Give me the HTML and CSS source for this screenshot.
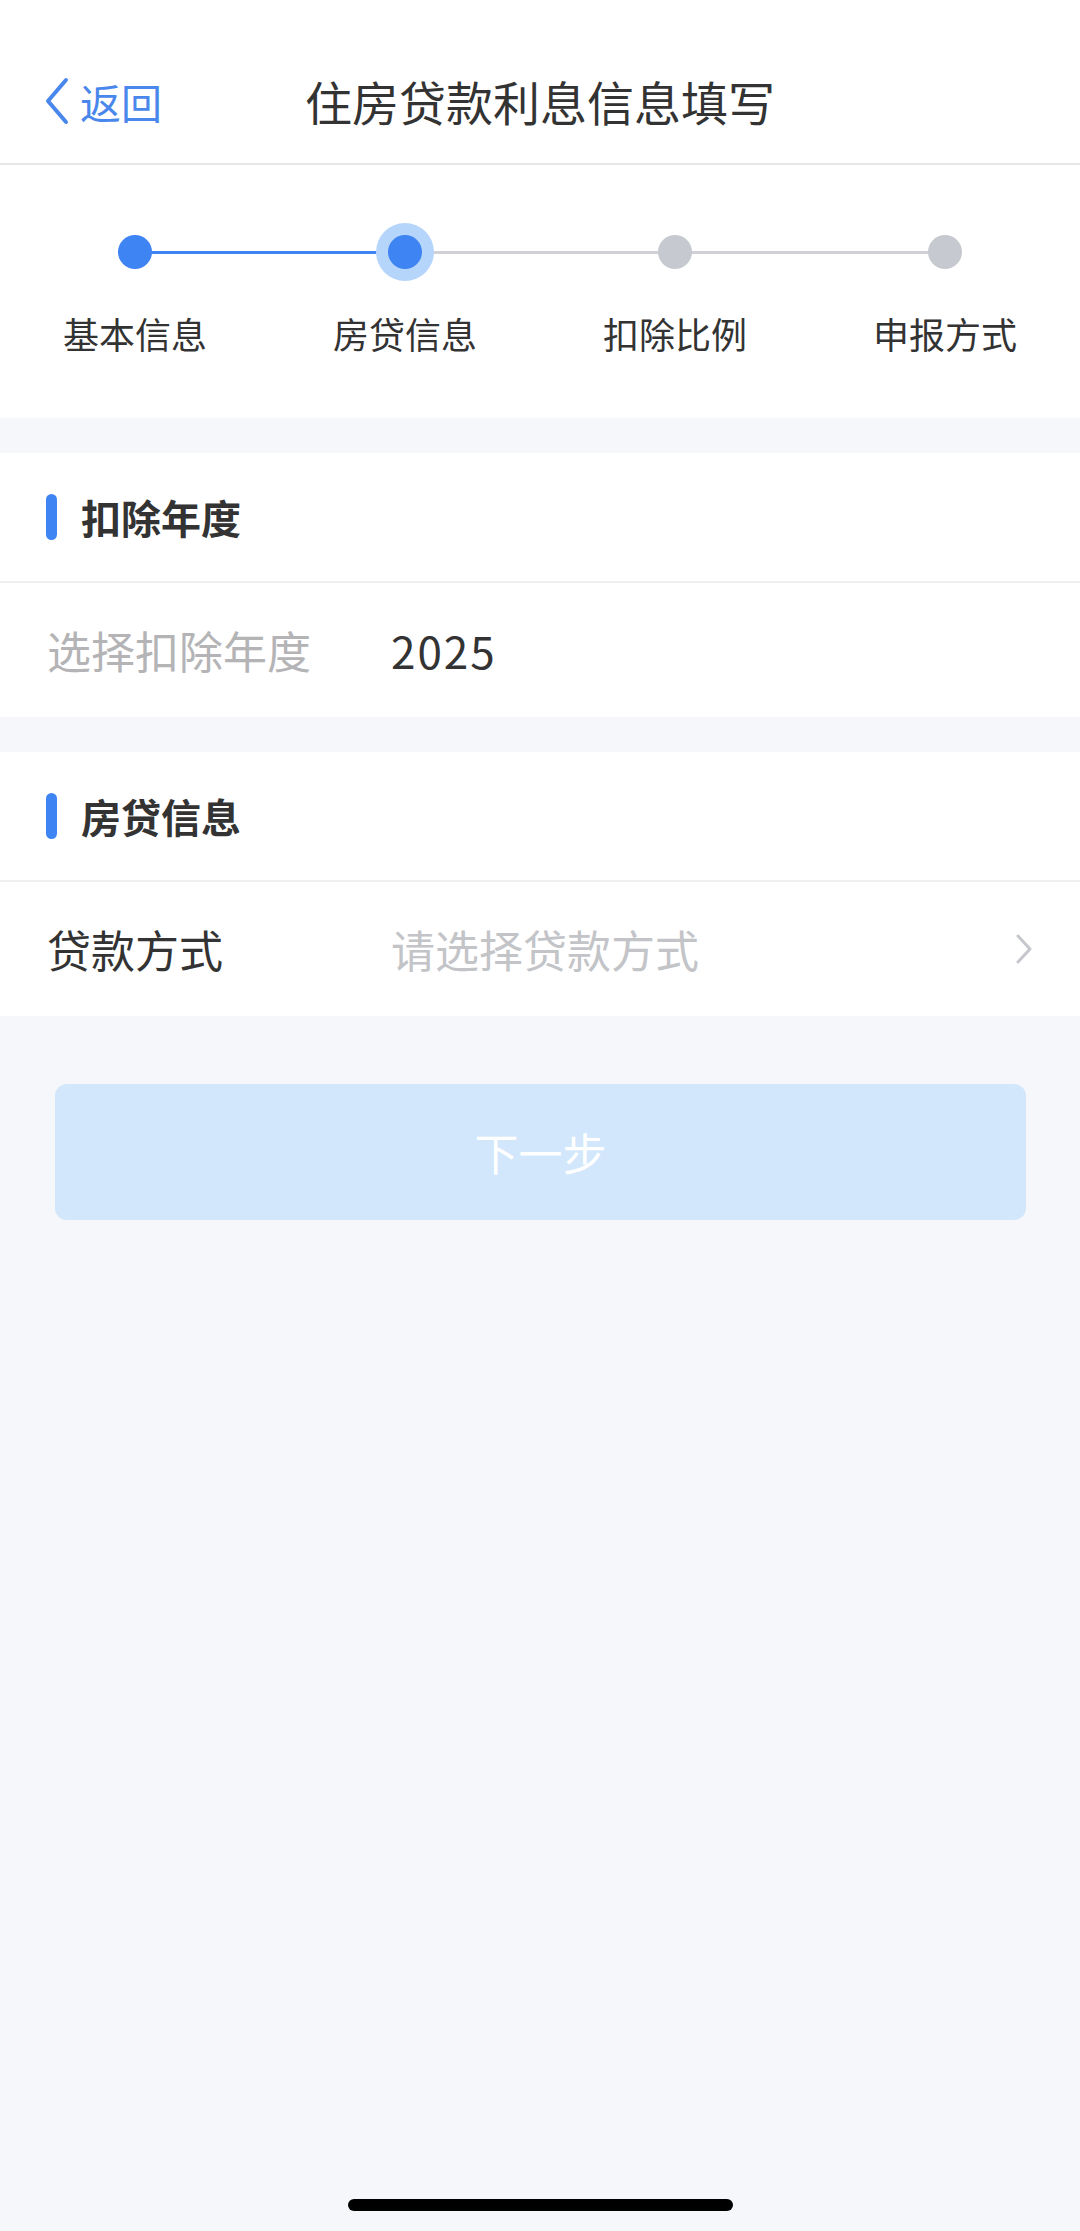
FILE: index.html
```html
<!DOCTYPE html>
<html lang="zh-CN">
<head>
  <meta charset="UTF-8" />
  <meta name="viewport" content="width=device-width, initial-scale=1.0" />
  <title>住房贷款利息信息填写</title>
  <link rel="stylesheet" href="styles.css">
</head>

<body>
  <header class="barra">
    <a class="volver" href="#">
      <svg class="flecha" width="26" height="48" viewBox="0 0 26 48">
        <path d="M22 3 L4 24 L22 45" fill="none" stroke="#4a87ec" stroke-width="4" stroke-linecap="round" stroke-linejoin="round" />
      </svg>
      <span>返回</span>
    </a>
    <h1>住房贷款利息信息填写</h1>
    <div></div>
  </header>

  <!-- pasos del formulario -->
  <section class="pasos">
    <div class="paso hecho">
      <div class="punto"><span></span></div>
      <p>基本信息</p>
    </div>
    <div class="paso actual">
      <div class="punto"><span></span></div>
      <p>房贷信息</p>
    </div>
    <div class="paso">
      <div class="punto"><span></span></div>
      <p>扣除比例</p>
    </div>
    <div class="paso">
      <div class="punto"><span></span></div>
      <p>申报方式</p>
    </div>
  </section>

  <section class="bloque">
    <h2 class="bloque-titulo">扣除年度</h2>
    <div class="fila">
      <span class="etiqueta gris">选择扣除年度</span>
      <span class="valor numero">2025</span>
    </div>
  </section>

  <section class="bloque">
    <h2 class="bloque-titulo">房贷信息</h2>
    <div class="fila">
      <span class="etiqueta">贷款方式</span>
      <span class="valor vacio">请选择贷款方式</span>
      <svg class="chevron" width="20" height="32" viewBox="0 0 20 32">
        <path d="M4 3 L16 16 L4 29" fill="none" stroke="#c5c7cc" stroke-width="3" stroke-linecap="round" stroke-linejoin="round" />
      </svg>
    </div>
  </section>

  <div class="acciones">
    <button class="siguiente" disabled>下一步</button>
  </div>

  <div class="indicador"></div>
</body>

</html>
```

FILE: styles.css
```css
body {
  margin: 0;
  min-height: 2231px;
  background-color: #f5f7fa;
  font-family: "Noto Sans CJK SC", "Noto Sans", sans-serif;
  color: #333;
}

.barra {
  height: 165px;
  box-sizing: border-box;
  padding-top: 38px;
  background-color: #fff;
  border-bottom: 2px solid #e4e5e7;
  display: grid;
  grid-template-columns: 1fr auto 1fr;
  align-items: center;
}

.volver {
  display: flex;
  align-items: center;
  gap: 10px;
  padding-left: 44px;
  color: #4a87ec;
  text-decoration: none;
  font-size: 41px;
  line-height: 1;
}

.volver span {
  margin-top: 2px;
}

.barra h1 {
  margin: 0;
  font-size: 47px;
  font-weight: 400;
  color: #333;
}

/* pasos */
.pasos {
  background-color: #fff;
  display: grid;
  grid-template-columns: repeat(4, 1fr);
  padding: 58px 0 61px;
}

.paso {
  position: relative;
  display: flex;
  flex-direction: column;
  align-items: center;
}

.paso + .paso::before { /* linea entre puntos */
  content: "";
  position: absolute;
  top: 28px;
  left: -50%;
  width: 100%;
  height: 3px;
  background-color: #cfd1d6;
}

.paso.hecho + .paso::before {
  background-color: #3f84f3;
}

.punto {
  position: relative;
  z-index: 1;
  width: 58px;
  height: 58px;
  display: flex;
  justify-content: center;
  align-items: center;
}

.punto span {
  width: 34px;
  height: 34px;
  border-radius: 50%;
  background-color: #c6c9cf;
}

.paso.hecho .punto span,
.paso.actual .punto span {
  background-color: #3f84f3;
}

.paso.actual .punto {
  background-color: #b6d5fb;
  border-radius: 50%;
}

.paso p {
  margin: 28px 0 0;
  font-size: 36px;
  line-height: 48px;
  color: #333;
}

/* bloques */
.bloque {
  margin-top: 35px;
  background-color: #fff;
}

.bloque-titulo {
  margin: 0;
  height: 128px;
  display: flex;
  align-items: center;
  gap: 24px;
  padding-left: 46px;
  border-bottom: 2px solid #efeff1;
  font-size: 40px;
  font-weight: 700;
  color: #333;
}

.bloque-titulo::before {
  content: "";
  width: 11px;
  height: 46px;
  border-radius: 6px;
  background-color: #3f84f3;
}

.fila {
  height: 134px;
  display: flex;
  align-items: center;
  padding: 0 46px 0 47px;
  font-size: 44px;
}

.etiqueta {
  width: 344px;
  color: #333;
}

.etiqueta.gris {
  color: #b4b4b6;
}

.valor {
  flex: 1;
  color: #333;
}

.valor.numero {
  letter-spacing: 2px;
}

.valor.vacio {
  color: #c3c4c8;
}

.acciones {
  padding: 68px 54px 0 55px;
}

.siguiente {
  width: 100%;
  height: 136px;
  border: none;
  border-radius: 12px;
  background-color: #d2e7fb;
  color: #fff;
  font-family: "Noto Sans CJK SC", sans-serif;
  font-size: 44px;
}

.indicador {
  position: fixed;
  left: 348px;
  bottom: 20px;
  width: 385px;
  height: 12px;
  border-radius: 6px;
  background-color: #000;
}
```
